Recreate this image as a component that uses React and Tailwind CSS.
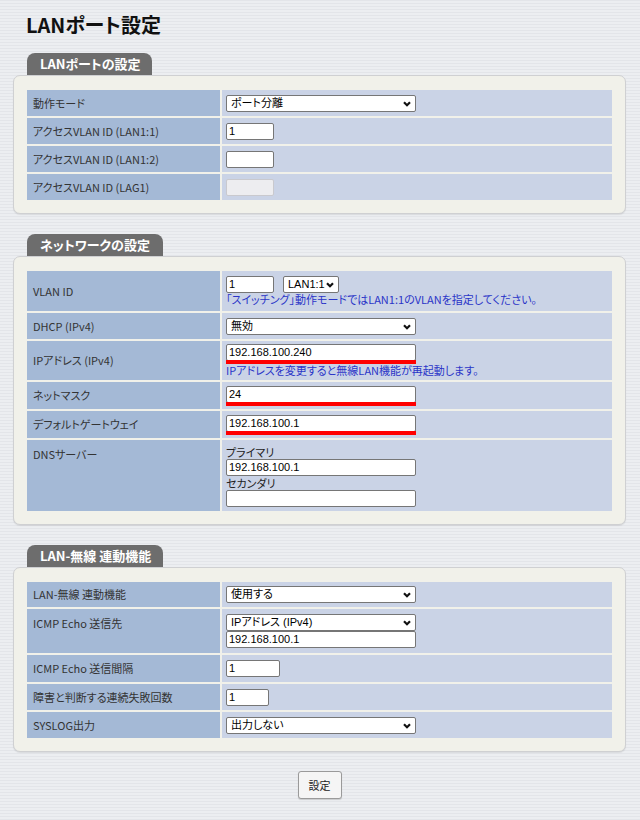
import React from "react";

const font = "font-['Noto_Sans_CJK_JP','Noto_Sans',sans-serif] [font-feature-settings:'palt']";
const inputFont = "font-['Liberation_Sans','Noto_Sans_CJK_JP',sans-serif]";

const Chevron = () => (
  <svg width="8" height="6" viewBox="0 0 8 6" className="absolute right-[4px] top-[5px]">
    <path d="M1 1.2 L4 4.2 L7 1.2" fill="none" stroke="#111" strokeWidth="2.2" />
  </svg>
);

const Select = ({ value, w = "w-[190px]" }) => (
  <div className={`relative ${w} h-[17px] bg-white border border-[#767676] rounded-[2px] text-[11px] leading-[15px] pl-[4px] text-black ${inputFont}`}>
    {value}
    <Chevron />
  </div>
);

const Input = ({ value = "", w = "w-[48px]", disabled = false, red = false }) => (
  <div>
    <div
      className={`${w} h-[17px] border rounded-[2px] text-[11px] leading-[15px] pl-[2px] text-black ${inputFont}
        ${disabled ? "bg-[#ededf0] border-[#c9c9ce]" : "bg-white border-[#767676]"}`}>
      {value}
    </div>
    {red && <div className={`${w} h-[4px] bg-[#ff0000] -mt-[1px]`} />}
  </div>
);

const Row = ({ label, h, top = false, children }) => (
  <div className={`flex gap-[2px] ${h}`}>
    <div className={`w-[193px] shrink-0 bg-[#a4b9d6] px-[6px] text-[11px] text-[#333] flex ${top ? "items-start pt-[6px]" : "items-center"}`}>
      {label}
    </div>
    <div className="flex-1 bg-[#cad3e6] pl-[4px] flex flex-col justify-center">
      {children}
    </div>
  </div>
);

const Section = ({ title, tabW, children }) => (
  <div>
    <div className={`ml-[14px] ${tabW} h-[22px] bg-[#6d6d6d] rounded-t-[8px] text-white font-bold text-[13px] leading-[22px] pl-[13px]`}>
      {title}
    </div>
    <div className="bg-[#f1f1ea] border border-[#cfd0d2] rounded-[7px] px-[13px] pt-[14px] pb-[13px] shadow-[0_1px_1px_rgba(0,0,0,0.08)]">
      <div className="flex flex-col gap-[2px]">{children}</div>
    </div>
  </div>
);

const Note = ({ children }) => (
  <div className="text-[11px] leading-[13px] text-[#2b35c8]">{children}</div>
);

export default function App() {
  return (
    <div className={`min-h-[820px] w-[640px] ${font} bg-[repeating-linear-gradient(180deg,#e3e5e9_0px,#e3e5e9_1px,#eceef1_1px,#eceef1_3px)] pl-[13px] pr-[14px] pt-[12px]`}>
      {/* Page Header */}
      <h1 className="text-[20px] font-bold text-[#111] leading-[26px] pl-[13px]">LANポート設定</h1>

      <div className="mt-[15px] flex flex-col gap-[20px]">
        <Section title="LANポートの設定" tabW="w-[125px]">
          <Row label="動作モード" h="h-[26px]">
            <Select value="ポート分離" />
          </Row>
          <Row label="アクセスVLAN ID (LAN1:1)" h="h-[26px]">
            <Input value="1" />
          </Row>
          <Row label="アクセスVLAN ID (LAN1:2)" h="h-[26px]">
            <Input />
          </Row>
          <Row label="アクセスVLAN ID (LAG1)" h="h-[26px]">
            <Input disabled />
          </Row>
        </Section>

        <Section title="ネットワークの設定" tabW="w-[136px]">
          <Row label="VLAN ID" h="h-[40px]">
            <div className="flex gap-[9px]">
              <Input value="1" />
              <Select value="LAN1:1" w="w-[56px]" />
            </div>
            <Note>「スイッチング」動作モードではLAN1:1のVLANを指定してください。</Note>
          </Row>
          <Row label="DHCP (IPv4)" h="h-[26px]">
            <Select value="無効" />
          </Row>
          <Row label="IPアドレス (IPv4)" h="h-[39px]">
            <Input value="192.168.100.240" w="w-[190px]" red />
            <Note>IPアドレスを変更すると無線LAN機能が再起動します。</Note>
          </Row>
          <Row label="ネットマスク" h="h-[27px]">
            <Input value="24" w="w-[190px]" red />
          </Row>
          <Row label="デフォルトゲートウェイ" h="h-[27px]">
            <Input value="192.168.100.1" w="w-[190px]" red />
          </Row>
          <Row label="DNSサーバー" h="h-[71px]" top>
            <div className="text-[11px] leading-[14px] text-[#222]">プライマリ</div>
            <Input value="192.168.100.1" w="w-[190px]" />
            <div className="text-[11px] leading-[14px] text-[#222]">セカンダリ</div>
            <Input w="w-[190px]" />
          </Row>
        </Section>

        <Section title="LAN-無線 連動機能" tabW="w-[136px]">
          <Row label="LAN-無線 連動機能" h="h-[25px]">
            <Select value="使用する" />
          </Row>
          <Row label="ICMP Echo 送信先" h="h-[44px]" top>
            <Select value="IPアドレス (IPv4)" />
            <Input value="192.168.100.1" w="w-[190px]" />
          </Row>
          <Row label="ICMP Echo 送信間隔" h="h-[27px]">
            <Input value="1" w="w-[54px]" />
          </Row>
          <Row label="障害と判断する連続失敗回数" h="h-[26px]">
            <Input value="1" w="w-[43px]" />
          </Row>
          <Row label="SYSLOG出力" h="h-[26px]">
            <Select value="出力しない" />
          </Row>
        </Section>
      </div>

      <div className="flex justify-center mt-[19px] pb-[20px]">
        <button className="w-[44px] h-[28px] bg-[#f5f5f5] border border-[#9a9a9a] rounded-[3px] text-[11px] text-[#222] shadow-[0_1px_1px_rgba(0,0,0,0.15)]">
          設定
        </button>
      </div>
    </div>
  );
}
